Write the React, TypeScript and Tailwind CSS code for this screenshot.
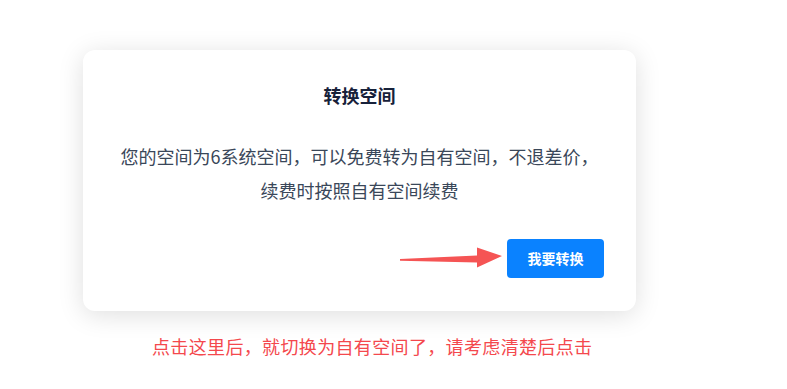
import React from 'react';

const font = { fontFamily: '"Noto Sans CJK SC", "Noto Sans", sans-serif' };

const ArrowPointer: React.FC = () => (
  <svg width="104" height="24" viewBox="0 0 104 24" className="shrink-0">
    <path d="M0 12 L77 8.5 L77 0.5 L102 9 L77 20.5 L77 15.5 L0 13.8 Z" fill="#f55454" />
  </svg>
);

export default function App() {
  return (
    <div className="min-h-[389px] w-full bg-white" style={font}>
      <div className="pl-[83px] pt-[50px]">
        <div className="w-[553px] rounded-[12px] bg-white px-8 pt-8 pb-[33px] shadow-[0_4px_26px_rgba(0,0,0,0.13)]">
          <h2 className="text-center text-[18px] leading-[26px] font-bold text-[#17213a]">转换空间</h2>
          <p className="mt-[31px] text-center text-[18px] leading-[34px] text-[#3a4759]">
            您的空间为6系统空间，可以免费转为自有空间，不退差价，
            <br />
            续费时按照自有空间续费
          </p>
          <div className="mt-8 flex items-center justify-end gap-[3px]">
            <ArrowPointer />
            <button className="h-[39px] w-[97px] rounded-[4px] bg-[#0a82ff] text-[14px] font-bold text-white">
              我要转换
            </button>
          </div>
        </div>
      </div>
      <p className="mt-[22px] pl-[152px] text-[18px] leading-[26px] tracking-[0.35px] text-[#f4484d]">
        点击这里后，就切换为自有空间了，请考虑清楚后点击
      </p>
    </div>
  );
}
